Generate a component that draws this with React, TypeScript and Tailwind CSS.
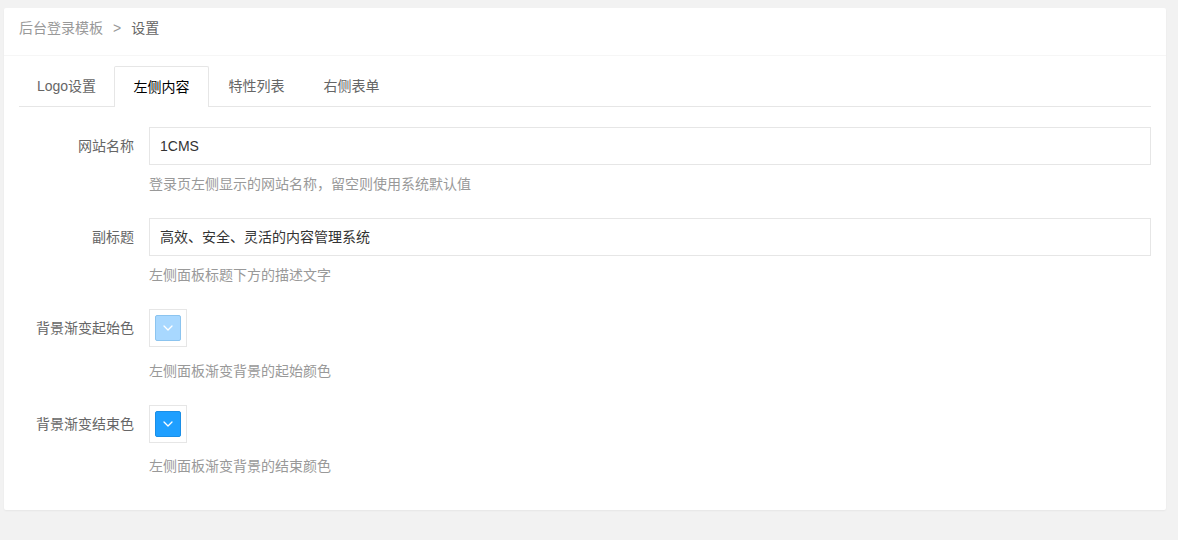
const FONT = { fontFamily: '"Liberation Sans", "Noto Sans CJK SC", sans-serif' };

const tabs = ["Logo设置", "左侧内容", "特性列表", "右侧表单"];

function Chevron() {
  return (
    <svg width="10" height="6" viewBox="0 0 10 6" fill="none">
      <path d="M1 1l4 4 4-4" stroke="#fff" strokeWidth="1.3" strokeLinecap="round" strokeLinejoin="round" />
    </svg>
  );
}

function ColorBox({ color, edge }: { color: string; edge: string }) {
  return (
    <div className="flex h-[38px] w-[38px] items-center justify-center border border-[#e6e6e6] bg-white">
      <div
        className={`flex h-[26px] w-[26px] items-center justify-center rounded-[2px] border ${color} ${edge}`}
      >
        <Chevron />
      </div>
    </div>
  );
}

function Row({ label, children, hint, hintGap }: { label: string; children: React.ReactNode; hint: string; hintGap: string }) {
  return (
    <div>
      <div className="flex items-center">
        <label className="w-[115px] shrink-0 text-right text-[14px] text-[#666]">{label}</label>
        <div className="ml-[15px] flex-1">{children}</div>
      </div>
      <div className={`ml-[130px] ${hintGap} text-[14px] leading-[20px] text-[#999]`}>{hint}</div>
    </div>
  );
}

export default function App() {
  return (
    <div className="h-[540px] bg-[#f2f2f2] pl-1 pr-3 pt-2" style={FONT}>
      <div className="h-[502px] rounded-[2px] bg-white shadow-[0_1px_2px_0_rgba(0,0,0,0.05)]">
        <div className="h-[48px] border-b border-[#f6f6f6] pl-[15px] text-[14px] leading-[41px]">
          <span className="text-[#999]">后台登录模板</span>
          <span className="mx-[10px] text-[#999]">&gt;</span>
          <span className="text-[#666]">设置</span>
        </div>

        <div className="pl-[15px] pr-[15px] pt-[10px]">
          <ul className="flex h-[41px] border-b border-[#e6e6e6]">
            {tabs.map((t, i) =>
              i === 1 ? (
                <li
                  key={t}
                  className="relative -mb-px h-[41px] w-[95px] rounded-t-[2px] border border-b-0 border-[#e6e6e6] bg-white text-center text-[14px] leading-[40px] text-black"
                >
                  {t}
                </li>
              ) : (
                <li key={t} className="h-[40px] w-[95px] text-center text-[14px] leading-[40px] text-[#666]">
                  {t}
                </li>
              )
            )}
          </ul>

          <div className="pt-[20px]">
            <Row label="网站名称" hint="登录页左侧显示的网站名称，留空则使用系统默认值" hintGap="mt-[9px]">
              <div className="flex h-[38px] items-center border border-[#e6e6e6] px-[10px] text-[14px] text-[#333]">1CMS</div>
            </Row>
            <div className="h-[24px]" />
            <Row label="副标题" hint="左侧面板标题下方的描述文字" hintGap="mt-[9px]">
              <div className="flex h-[38px] items-center border border-[#e6e6e6] px-[10px] text-[14px] text-[#333]">
                高效、安全、灵活的内容管理系统
              </div>
            </Row>
            <div className="h-[24px]" />
            <Row label="背景渐变起始色" hint="左侧面板渐变背景的起始颜色" hintGap="mt-[14px]">
              <ColorBox color="bg-[#a8d8ff]" edge="border-[#8cc4ef]" />
            </Row>
            <div className="h-[24px]" />
            <Row label="背景渐变结束色" hint="左侧面板渐变背景的结束颜色" hintGap="mt-[13px]">
              <ColorBox color="bg-[#1e9fff]" edge="border-[#1a8ee6]" />
            </Row>
          </div>
        </div>
      </div>
    </div>
  );
}
